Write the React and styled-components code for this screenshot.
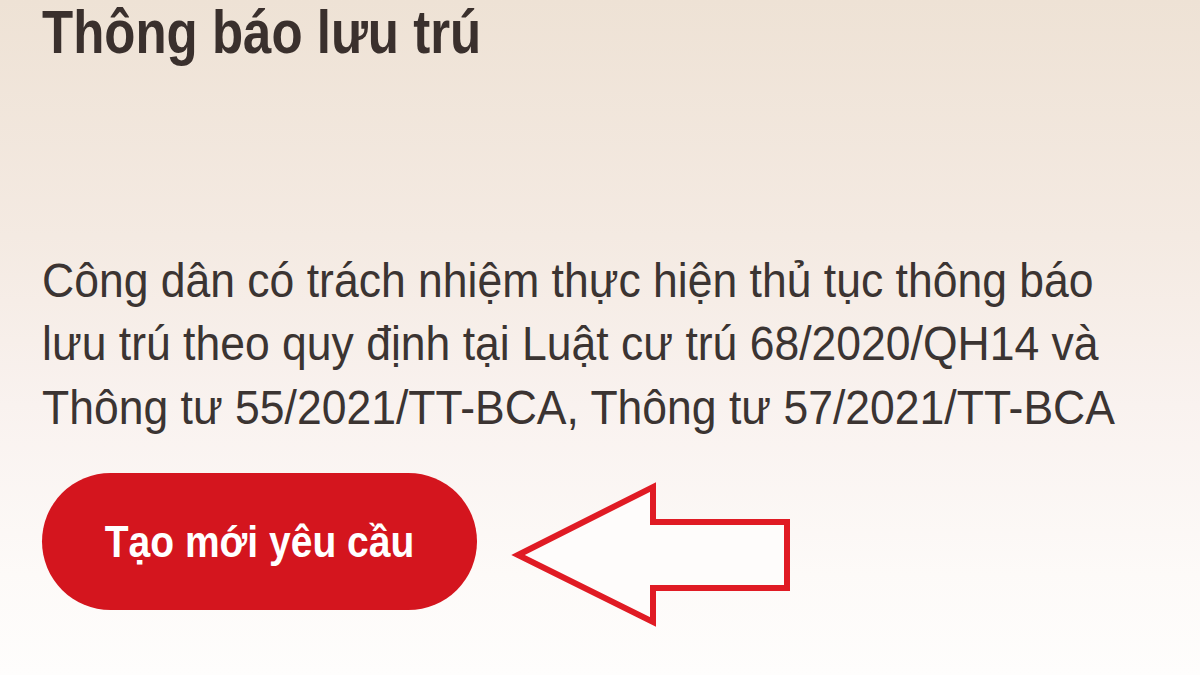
import React from 'react';
import styled, { createGlobalStyle } from 'styled-components';

const GlobalStyle = createGlobalStyle`
  html, body {
    margin: 0;
    padding: 0;
  }
  body {
    font-family: "Liberation Sans", Arial, sans-serif;
  }
`;

const Page = styled.div`
  width: 1200px;
  height: 675px;
  overflow: hidden;
  box-sizing: border-box;
  padding: 2px 0 0 42px;
  background: linear-gradient(180deg, #eee2d5 0%, #f4eae2 35%, #f9f2ef 60%, #fdfaf8 85%, #fefdfc 100%);
  display: flex;
  flex-direction: column;
  align-items: flex-start;
`;

const Title = styled.h1`
  margin: 0;
  font-size: 51px;
  line-height: 51px;
  font-weight: 700;
  color: #3a302d;
  transform: scaleY(1.18);
  transform-origin: left top;
`;

const Notice = styled.p`
  margin: 196px 0 0;
  width: 1090px;
  font-size: 44.5px;
  line-height: 59.4px;
  font-weight: 400;
  color: #3b3432;
  transform: scaleY(1.07);
  transform-origin: left top;
`;

const ActionRow = styled.div`
  margin-top: 46px;
  display: flex;
  align-items: flex-start;
  gap: 31px;
`;

const CreateButton = styled.button`
  width: 435px;
  height: 137px;
  border: none;
  border-radius: 69px;
  background: #d4151e;
  color: #ffffff;
  font-family: "Liberation Sans", Arial, sans-serif;
  font-size: 39px;
  font-weight: 700;
  display: flex;
  align-items: center;
  justify-content: center;
  padding: 0;
  cursor: pointer;

  span {
    display: inline-block;
    transform: scaleY(1.12);
  }
`;

const Pointer = styled.svg`
  margin-top: 7px;
  flex: none;
`;

function ArrowLeft() {
  return (
    <Pointer width="290" height="150" viewBox="0 0 290 150">
      <polygon
        points="10,75 145,7 145,42 279,42 279,108 145,108 145,142"
        fill="#fefcfb"
        stroke="#e01b24"
        strokeWidth="6"
        strokeLinejoin="miter"
      />
    </Pointer>
  );
}

export default function App() {
  return (
    <React.Fragment>
      <GlobalStyle />
      <Page>
        <Title>Thông báo lưu trú</Title>
        <Notice>
          Công dân có trách nhiệm thực hiện thủ tục thông báo lưu trú theo quy định tại Luật cư trú 68/2020/QH14 và Thông tư 55/2021/TT-BCA, Thông tư 57/2021/TT-BCA
        </Notice>
        <ActionRow>
          <CreateButton>
            <span>Tạo mới yêu cầu</span>
          </CreateButton>
          <ArrowLeft />
        </ActionRow>
      </Page>
    </React.Fragment>
  );
}
